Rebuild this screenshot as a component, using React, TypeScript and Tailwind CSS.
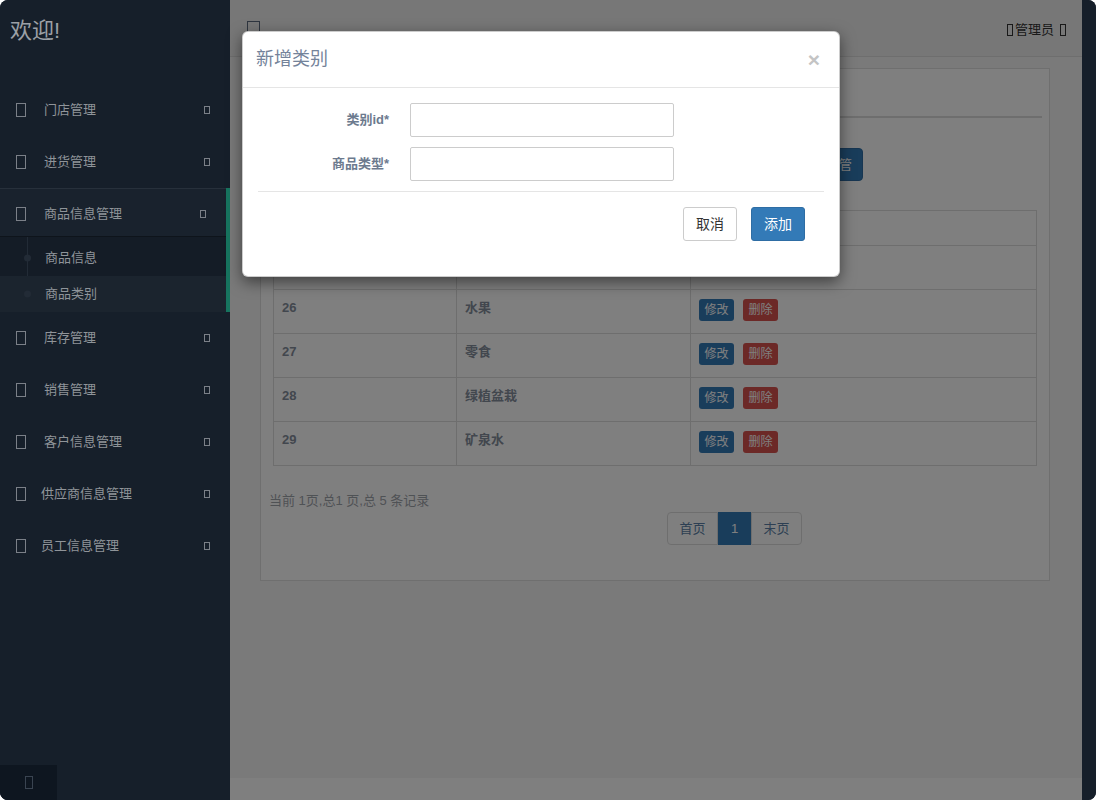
import type { ReactNode } from "react";

/** 缺字方块：模拟图标字体未加载时的占位框 */
function Tofu({ className = "" }: { className?: string }) {
  return <span className={`inline-block shrink-0 border-[1.5px] ${className}`} />;
}

type Menu = { label: string; textCls?: string };

const topMenus: Menu[] = [{ label: "门店管理" }, { label: "进货管理" }];
const bottomMenus: Menu[] = [
  { label: "库存管理" },
  { label: "销售管理" },
  { label: "客户信息管理" },
  { label: "供应商信息管理", textCls: "ml-[15px]" },
  { label: "员工信息管理", textCls: "ml-[15px]" },
];

function MenuItem({ label, textCls = "ml-[18px]" }: Menu) {
  return (
    <div className="flex h-[52px] items-center pl-[16px] pr-[20px]">
      <Tofu className="h-[14px] w-[10px] border-[#7b8088]" />
      <span className={`${textCls} text-[13px] text-[#8f9499]`}>{label}</span>
      <Tofu className="ml-auto h-[8px] w-[6px] border-[1px] border-[#7b8088]" />
    </div>
  );
}

function Sidebar() {
  return (
    <aside className="flex w-[230px] shrink-0 flex-col bg-[#161f2a]">
      <div className="h-[84px] pl-[10px] pt-[16px] text-[22px] leading-[30px] text-[#9ca0a6]">
        欢迎!
      </div>
      {topMenus.map((m) => (
        <MenuItem key={m.label} {...m} />
      ))}

      {/* 当前展开的分组 */}
      <div className="border-r-4 border-[#17745f]">
        <div className="flex h-[49px] items-center border-y border-t-[#27303b] border-b-[#0e141b] bg-[#19222d] pl-[16px] pr-[20px] pt-[2px]">
          <Tofu className="h-[14px] w-[10px] border-[#7b8088]" />
          <span className="ml-[18px] text-[13px] text-[#8f9499]">商品信息管理</span>
          <Tofu className="ml-auto h-[8px] w-[6px] border-[1px] border-[#7b8088]" />
        </div>
        <div className="relative bg-[#141c26] pt-[3px]">
          <span className="absolute bottom-0 left-[27px] top-0 w-px bg-[#222b36]" />
          {["商品信息", "商品类别"].map((s, i) => (
            <div
              key={s}
              className={`relative flex h-[36px] items-center pl-[45px] text-[13px] text-[#8f949a] ${
                i === 1 ? "bg-[#1b242e]" : ""
              }`}
            >
              <span className="absolute left-[24px] top-1/2 h-[7px] w-[7px] -translate-y-1/2 rounded-full bg-[#222b36]" />
              {s}
            </div>
          ))}
        </div>
      </div>

      {bottomMenus.map((m) => (
        <MenuItem key={m.label} {...m} />
      ))}

      <div className="mt-auto flex h-[35px] w-[57px] items-center justify-center bg-[#0e1620]">
        <Tofu className="h-[13px] w-[8px] border-[#3a4451]" />
      </div>
    </aside>
  );
}

const rows = [
  { id: 25, name: "日用品" },
  { id: 26, name: "水果" },
  { id: 27, name: "零食" },
  { id: 28, name: "绿植盆栽" },
  { id: 29, name: "矿泉水" },
];

function Cell({ children, className = "" }: { children: ReactNode; className?: string }) {
  return (
    <td className={`border border-[#dddddd] p-[8px] align-top leading-[20px] ${className}`}>
      {children}
    </td>
  );
}

function CategoryPanel() {
  return (
    <div className="ml-[30px] mr-[32px] mt-[11px] border border-[#dedede] bg-white p-[8px]">
      <div className="mr-[-1px] flex h-[41px] items-end border-b-2 border-[#dddddd]">
        <span className="px-[15px] pb-[10px] text-[14px] text-[#555]">商品类别</span>
      </div>
      <div className="mt-[30px] flex">
        <button className="ml-[494px] h-[33px] w-[100px] rounded-[4px] border border-[#2e6da4] bg-[#337ab7] pr-[10px] text-right text-[13px] text-white">
          新增类别管
        </button>
      </div>
      <table className="ml-[4px] mt-[29px] w-[764px] border-collapse text-[13px] font-bold text-[#858e9c]">
        <thead>
          <tr className="h-[35px]">
            <th className="w-[183px] border border-[#dddddd] px-[8px] text-left">类别id</th>
            <th className="w-[234px] border border-[#dddddd] px-[8px] text-left">商品类型</th>
            <th className="border border-[#dddddd] px-[8px] text-left">操作</th>
          </tr>
        </thead>
        <tbody>
          {rows.map((r) => (
            <tr key={r.id} className="h-[44px]">
              <Cell>{r.id}</Cell>
              <Cell>{r.name}</Cell>
              <Cell className="pt-[9px] font-normal">
                <div className="flex gap-[9px]">
                  <span className="flex h-[22px] w-[35px] items-center justify-center rounded-[3px] bg-[#337ab7] text-[12px] text-white">
                    修改
                  </span>
                  <span className="flex h-[22px] w-[35px] items-center justify-center rounded-[3px] bg-[#d9534f] text-[12px] text-white">
                    删除
                  </span>
                </div>
              </Cell>
            </tr>
          ))}
        </tbody>
      </table>
      <p className="mt-[25px] text-[13px] leading-[20px] text-[#9fa4ab]">当前 1页,总1 页,总 5 条记录</p>
      <div className="mb-[27px] ml-[398px] mt-px flex h-[33px] w-fit text-[13px]">
        <span className="flex w-[51px] items-center justify-center rounded-l-[4px] border border-[#ddd] text-[#5a7ea6]">
          首页
        </span>
        <span className="flex w-[33px] items-center justify-center border border-[#337ab7] bg-[#337ab7] text-white">
          1
        </span>
        <span className="flex w-[51px] items-center justify-center rounded-r-[4px] border border-[#ddd] text-[#5a7ea6]">
          末页
        </span>
      </div>
    </div>
  );
}

function AddCategoryModal() {
  return (
    <div className="absolute left-[12px] top-[31px] w-[598px] rounded-[6px] border border-black/20 bg-white shadow-[0_5px_15px_rgba(0,0,0,0.5)]">
      <div className="flex items-center justify-between border-b border-[#e5e5e5] py-[15px] pl-[13px] pr-[14px]">
        <h4 className="text-[18px] leading-[25px] text-[#74839a]">新增类别</h4>
        <span className="mr-[5px] text-[21px] font-bold leading-none text-[#c4c4c4]">×</span>
      </div>
      <div className="px-[15px] pt-[15px]">
        {["类别id*", "商品类型*"].map((label) => (
          <div key={label} className="mb-[10px] flex items-center">
            <label className="w-[131px] text-right text-[13px] font-bold text-[#6c7a8e]">{label}</label>
            <input className="ml-[21px] h-[34px] w-[264px] rounded-[2px] border border-[#cccccc] px-[10px] text-[14px] outline-none" />
          </div>
        ))}
        <div className="h-px bg-[#e5e5e5]" />
        <div className="flex justify-end gap-[14px] pb-[35px] pr-[19px] pt-[15px]">
          <button className="h-[34px] w-[54px] rounded-[3px] border border-[#cccccc] bg-white text-[14px] text-[#333]">
            取消
          </button>
          <button className="h-[34px] w-[54px] rounded-[3px] border border-[#2e6da4] bg-[#337ab7] text-[14px] text-white">
            添加
          </button>
        </div>
      </div>
    </div>
  );
}

export default function App() {
  return (
    <div className="h-[800px] w-[1096px] bg-white font-['Liberation_Sans','Noto_Sans_CJK_SC',sans-serif]">
      <div className="flex h-full overflow-hidden rounded-[8px] bg-[#161f2a]">
        <Sidebar />
        <main className="relative flex flex-1 flex-col bg-[#f5f5f5]">
          <header className="flex h-[57px] shrink-0 items-center border-b border-[#dddddd] bg-[#eeeeee] pl-[17px] pr-[16px]">
            <Tofu className="mt-[2px] h-[17px] w-[13px] border-2 border-[#5c6b7e]" />
            <div className="ml-auto flex items-center pt-[3px] text-[13px] text-[#333]">
              <Tofu className="mr-[2px] h-[12px] w-[6px] border-[1px] border-[#333]" />
              <span>管理员</span>
              <Tofu className="ml-[6px] h-[12px] w-[6px] border-[1px] border-[#333]" />
            </div>
          </header>
          <div className="flex-1">
            <CategoryPanel />
          </div>
          <footer className="h-[22px] shrink-0 bg-white" />

          {/* 弹窗遮罩 */}
          <div className="absolute inset-0 bg-black/50" />
          <AddCategoryModal />
        </main>
        <div className="w-[14px] shrink-0 bg-[#161f2a]" />
      </div>
    </div>
  );
}
